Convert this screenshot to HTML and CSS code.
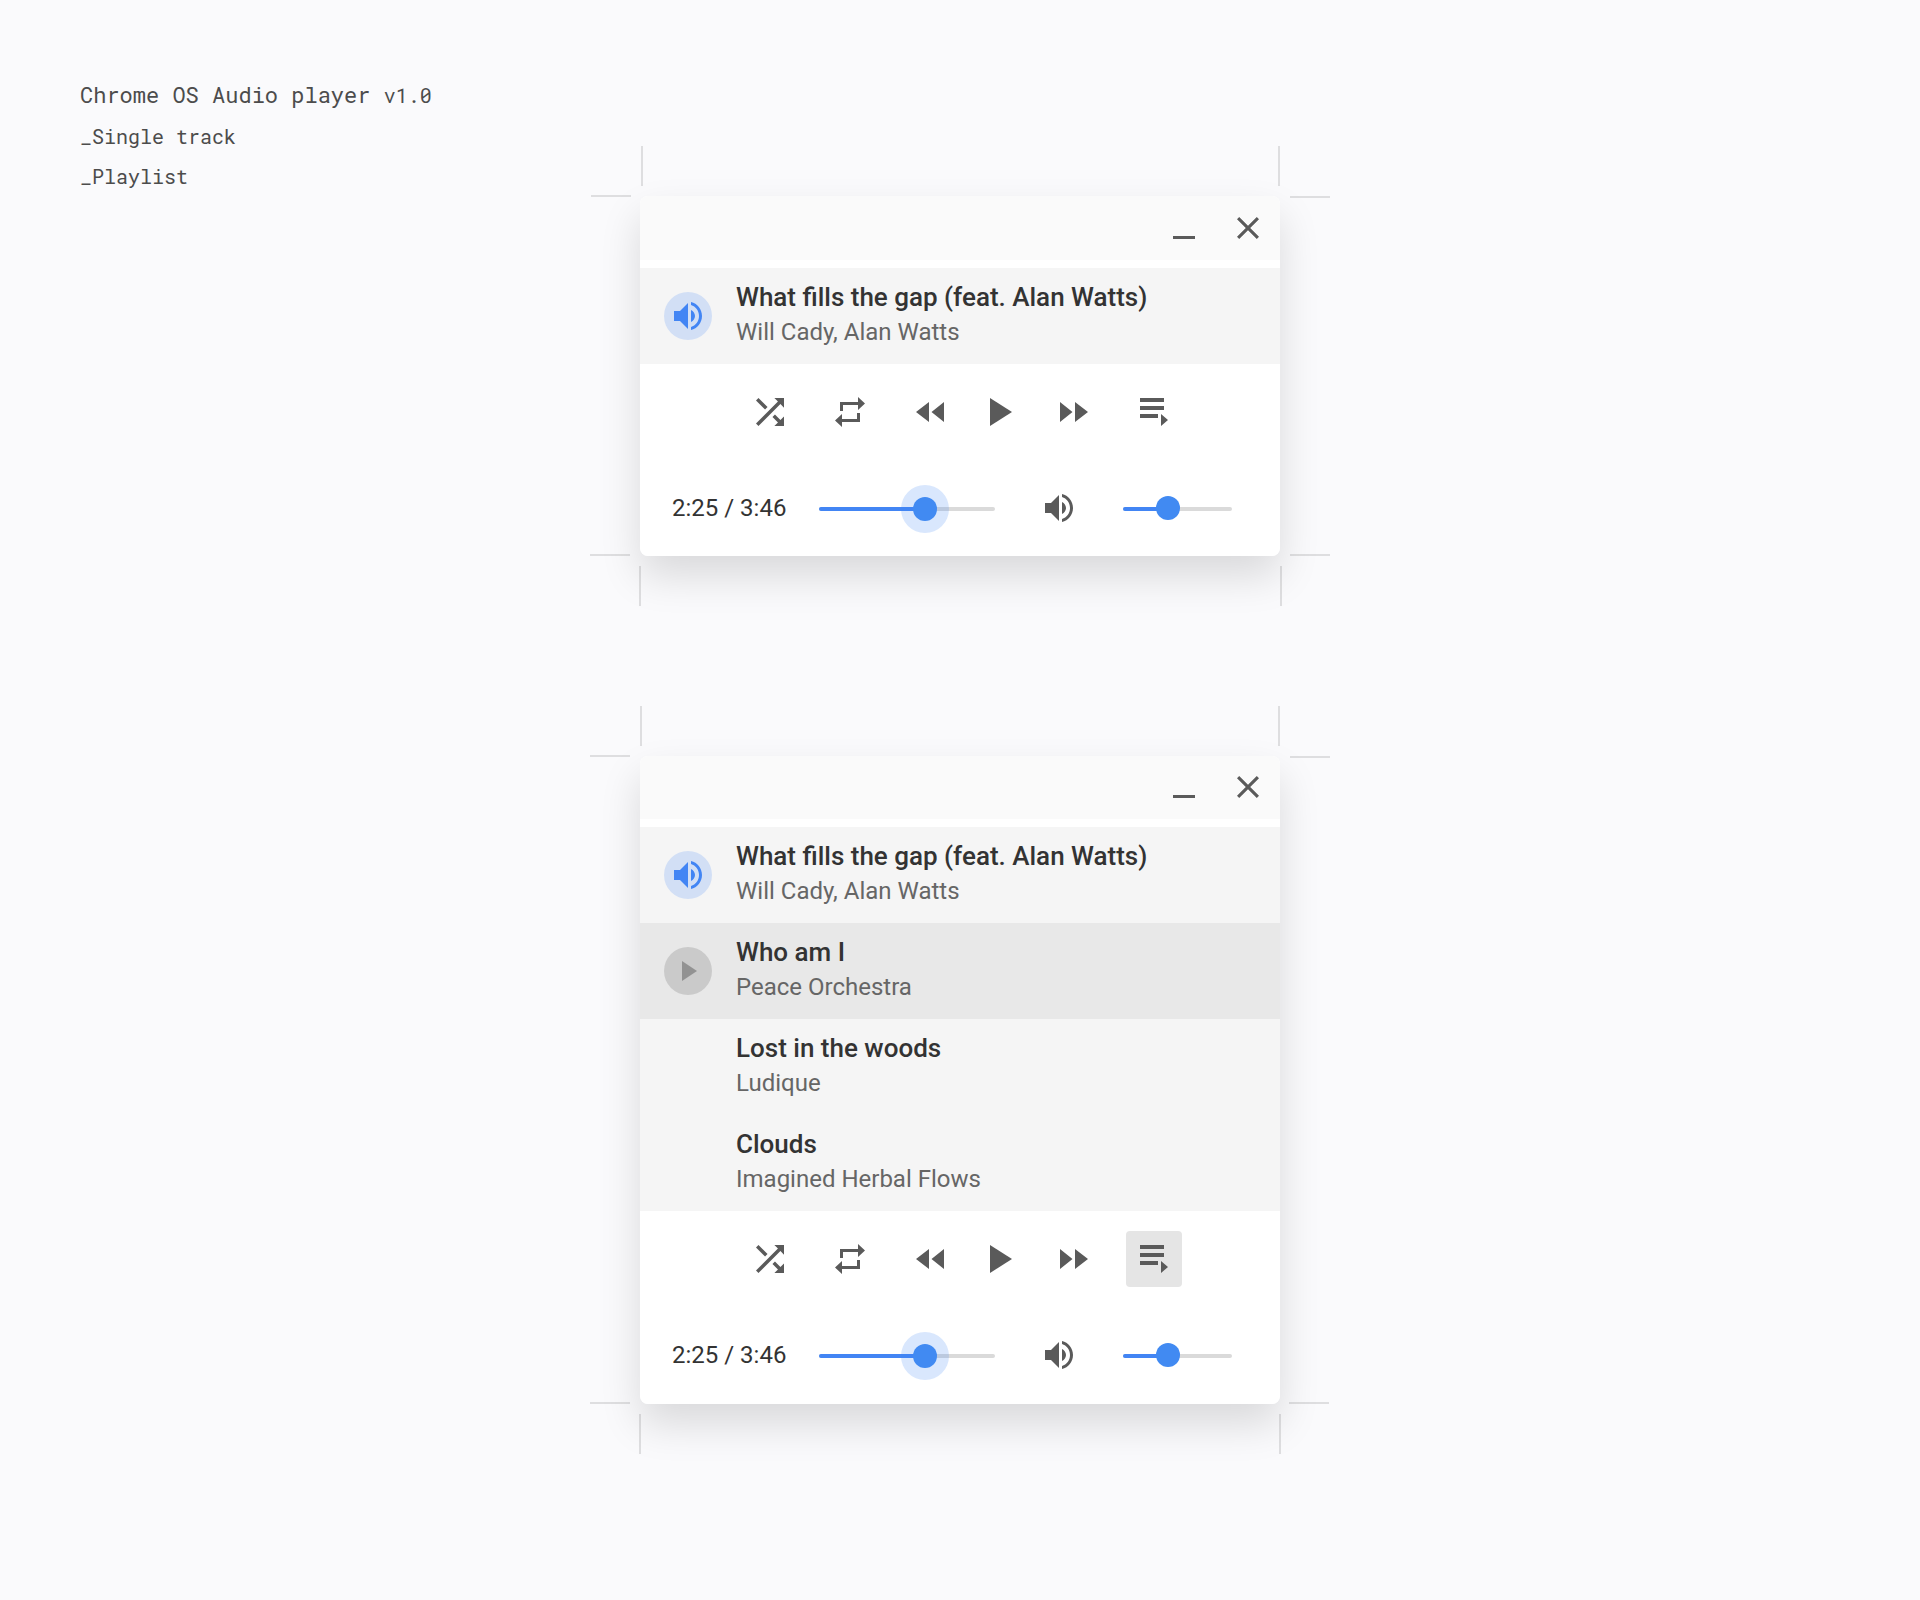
FILE: index.html
```html
<!DOCTYPE html>
<html lang="en">
<head>
<meta charset="utf-8">
<title>Chrome OS Audio player</title>
<link rel="stylesheet" href="styles.css">
</head>
<body>
<svg class="sprite" aria-hidden="true">
  <symbol id="volume" viewBox="0 0 28 28"><path d="M0 9v10h6l8 8V1L6 9zM17 8v12c2.400-1.200 4-3.400 4-6s-1.600-4.800-4-6zM17 0v3c4.600 1.300 8 5.700 8 11s-3.400 9.700-8 11v3c6.300-1.400 11-7.200 11-14S23.300 1.400 17 0z"/></symbol>
  <symbol id="shuffle" viewBox="4 4 16 16"><path d="M10.590 9.170L5.410 4 4 5.410l5.170 5.170 1.420-1.410zM14.500 4l2.040 2.040L4 18.590 5.410 20 17.960 7.460 20 9.500V4h-5.500zm.33 9.410l-1.410 1.410 3.130 3.130L14.500 20H20v-5.500l-2.040 2.040-3.130-3.130z"/></symbol>
  <symbol id="repeat" viewBox="0 0 30 30"><path d="M5 5h18V0l7 6.500-7 6.500V8H8v6H5zM25 25H7v5l-7-6.500L7 17v5h15v-6h3z"/></symbol>
  <symbol id="rewind" viewBox="0 0 28 20"><path d="M13 0v20L0 10zM28 0v20L15.500 10z"/></symbol>
  <symbol id="play" viewBox="0 0 22 28"><path d="M0 0v28l22-14z"/></symbol>
  <symbol id="forward" viewBox="0 0 28 20"><path d="M0 0v20l12.500-10zM15 0v20l13-10z"/></symbol>
  <symbol id="queue" viewBox="0 0 28 28"><path d="M0 0h24v4H0zM0 8h24v4H0zM0 16h18v4H0zM21 16v12l7-6z"/></symbol>
  <symbol id="close" viewBox="5 5 14 14"><path d="M19 6.410L17.590 5 12 10.590 6.410 5 5 6.410 10.590 12 5 17.590 6.410 19 12 13.410 17.590 19 19 17.590 13.410 12z"/></symbol>
</svg>

<aside class="notes">
  <h1>Chrome OS Audio player <small>v1.0</small></h1>
  <ul>
    <li>_Single track</li>
    <li>_Playlist</li>
  </ul>
</aside>

<main class="players">
  <section class="player single">
    <i class="mark v tl"></i><i class="mark h tl"></i><i class="mark v tr"></i><i class="mark h tr"></i>
    <i class="mark v bl"></i><i class="mark h bl"></i><i class="mark v br"></i><i class="mark h br"></i>
    <div class="window">
      <header class="titlebar">
        <button class="minimize" aria-label="Minimize"><span></span></button>
        <button aria-label="Close"><svg width="22" height="22"><use href="#close"/></svg></button>
      </header>
      <ol class="tracks">
        <li class="track">
          <span class="badge playing"><svg width="28" height="28"><use href="#volume"/></svg></span>
          <div><h2>What fills the gap (feat. Alan Watts)</h2><p>Will Cady, Alan Watts</p></div>
        </li>
      </ol>
      <div class="controls">
        <button aria-label="Shuffle"><svg width="28" height="28"><use href="#shuffle"/></svg></button>
        <button aria-label="Repeat"><svg width="30" height="30"><use href="#repeat"/></svg></button>
        <button aria-label="Previous"><svg width="28" height="20"><use href="#rewind"/></svg></button>
        <button class="play" aria-label="Play"><svg width="22" height="28"><use href="#play"/></svg></button>
        <button aria-label="Next"><svg width="28" height="20"><use href="#forward"/></svg></button>
        <button aria-label="Playlist"><svg width="28" height="28"><use href="#queue"/></svg></button>
      </div>
      <div class="progress">
        <span class="time">2:25 / 3:46</span>
        <div class="slider seek"><div class="fill"></div><div class="knob active"></div></div>
        <svg class="speaker" width="28" height="28"><use href="#volume"/></svg>
        <div class="slider volume"><div class="fill"></div><div class="knob"></div></div>
      </div>
    </div>
  </section>

  <section class="player playlist">
    <i class="mark v tl"></i><i class="mark h tl"></i><i class="mark v tr"></i><i class="mark h tr"></i>
    <i class="mark v bl"></i><i class="mark h bl"></i><i class="mark v br"></i><i class="mark h br"></i>
    <div class="window">
      <header class="titlebar">
        <button class="minimize" aria-label="Minimize"><span></span></button>
        <button aria-label="Close"><svg width="22" height="22"><use href="#close"/></svg></button>
      </header>
      <ol class="tracks">
        <li class="track">
          <span class="badge playing"><svg width="28" height="28"><use href="#volume"/></svg></span>
          <div><h2>What fills the gap (feat. Alan Watts)</h2><p>Will Cady, Alan Watts</p></div>
        </li>
        <li class="track hover">
          <span class="badge paused"><svg width="15" height="20" viewBox="0 0 15 20"><path d="M0 0v20l15-10z"/></svg></span>
          <div><h2>Who am I</h2><p>Peace Orchestra</p></div>
        </li>
        <li class="track">
          <span class="badge"></span>
          <div><h2>Lost in the woods</h2><p>Ludique</p></div>
        </li>
        <li class="track">
          <span class="badge"></span>
          <div><h2>Clouds</h2><p>Imagined Herbal Flows</p></div>
        </li>
      </ol>
      <div class="controls">
        <button aria-label="Shuffle"><svg width="28" height="28"><use href="#shuffle"/></svg></button>
        <button aria-label="Repeat"><svg width="30" height="30"><use href="#repeat"/></svg></button>
        <button aria-label="Previous"><svg width="28" height="20"><use href="#rewind"/></svg></button>
        <button class="play" aria-label="Play"><svg width="22" height="28"><use href="#play"/></svg></button>
        <button aria-label="Next"><svg width="28" height="20"><use href="#forward"/></svg></button>
        <button class="pressed" aria-label="Playlist"><svg width="28" height="28"><use href="#queue"/></svg></button>
      </div>
      <div class="progress">
        <span class="time">2:25 / 3:46</span>
        <div class="slider seek"><div class="fill"></div><div class="knob active"></div></div>
        <svg class="speaker" width="28" height="28"><use href="#volume"/></svg>
        <div class="slider volume"><div class="fill"></div><div class="knob"></div></div>
      </div>
    </div>
  </section>
</main>
</body>
</html>
```
FILE: styles.css
```css
* { box-sizing: border-box; margin: 0; padding: 0; }

body {
  display: grid;
  grid-template-columns: 640px 640px;
  min-height: 1600px;
  background: #fafafc;
  color: #333;
  font-family: Roboto, sans-serif;
}

.sprite { display: none; }
svg { display: block; fill: currentColor; }
ul, ol { list-style: none; }
button { border: 0; background: none; color: #5a5a5a; font: inherit; }

/* Artboard notes */
.notes {
  padding: 75px 0 0 80px;
  color: #4c4c4c;
  font: 20px/40px "Roboto Mono", "Liberation Mono", monospace;
}
.notes h1 { margin-bottom: 1px; font-size: 22px; font-weight: 400; }
.notes small { font-size: 20px; }

/* Player windows */
.players {
  display: flex;
  flex-direction: column;
  gap: 200px;
  padding-top: 196px;
}
.player {
  position: relative;
  border-radius: 8px;
  box-shadow: 0 20px 40px rgba(0, 0, 0, .135);
}
.window {
  overflow: hidden;
  border-radius: 8px;
  background: #fff;
}

.titlebar {
  display: flex;
  align-items: flex-end;
  justify-content: flex-end;
  height: 64px;
  background: #fafafa;
}
.playlist .titlebar { height: 63px; }
.titlebar button {
  display: grid;
  place-items: center;
  flex: none;
  width: 64px;
  height: 64px;
}
.titlebar .minimize { place-items: end center; padding-bottom: 21px; }
.minimize span { width: 22px; height: 3px; background: currentColor; }

.tracks { margin-top: 8px; background: #f5f5f5; }
.track { display: flex; gap: 24px; height: 96px; padding: 12px 24px; }
.track.hover { background: #e8e8e8; }
.track h2 { font-size: 26px; font-weight: 500; line-height: 34px; }
.track p { padding-top: 1px; color: #666; font-size: 24px; line-height: 34px; }
.badge {
  display: grid;
  place-items: center;
  flex: none;
  width: 48px;
  height: 48px;
  margin-top: 12px;
  border-radius: 50%;
}
.badge.playing { background: #d2dff5; color: #4285f4; }
.badge.paused { padding-left: 2px; background: #cacaca; color: #929292; }

.controls { display: flex; gap: 24px; padding: 20px 0 0 102px; }
.controls button {
  display: grid;
  place-items: center;
  width: 56px;
  height: 56px;
  border-radius: 4px;
}
.controls .play { width: 40px; padding-right: 2px; }
.controls .pressed { background: #e5e5e5; }

.progress {
  display: flex;
  align-items: center;
  height: 56px;
  margin: 40px 0 20px;
  padding-left: 32px;
}
.playlist .progress { margin-bottom: 21px; }
.time { width: 147px; font-size: 24px; line-height: 34px; }
.speaker { margin: 0 50px; color: #5a5a5a; }
.slider {
  position: relative;
  height: 4px;
  margin-top: 2px;
  border-radius: 2px;
  background: #dadada;
}
.seek { width: 176px; }
.volume { width: 109px; }
.fill { height: 4px; border-radius: 2px; background: #4285f4; }
.seek .fill { width: 106px; }
.volume .fill { width: 45px; }
.knob {
  position: absolute;
  width: 24px;
  height: 24px;
  border-radius: 50%;
  background: #418af2;
}
.knob.active { box-shadow: 0 0 0 12px rgba(66, 133, 244, .2); }
.seek .knob { top: -10px; left: 94px; }
.volume .knob { top: -11px; left: 33px; }

/* Registration marks around each window */
.mark { position: absolute; background: rgba(0, 0, 0, .11); }
.mark.v { width: 2px; height: 40px; }
.mark.h { width: 40px; height: 2px; }
.v.tl, .v.tr { top: -50px; }
.v.bl, .v.br { bottom: -50px; }
.h.tl, .h.bl { left: -50px; }
.h.tr, .h.br { right: -50px; }
.v.tl { left: 0; }
.v.tr { right: 0; }
.v.bl { left: -1px; }
.v.br { right: -1px; }
.h.tl { top: -1px; }
.h.tr { top: 0; }
.h.bl, .h.br { bottom: 0; }
.single .v.tl { left: 1px; }
.single .h.tl { left: -49px; }
.single .v.br { right: -2px; }
.playlist .h.br { right: -49px; }
```
